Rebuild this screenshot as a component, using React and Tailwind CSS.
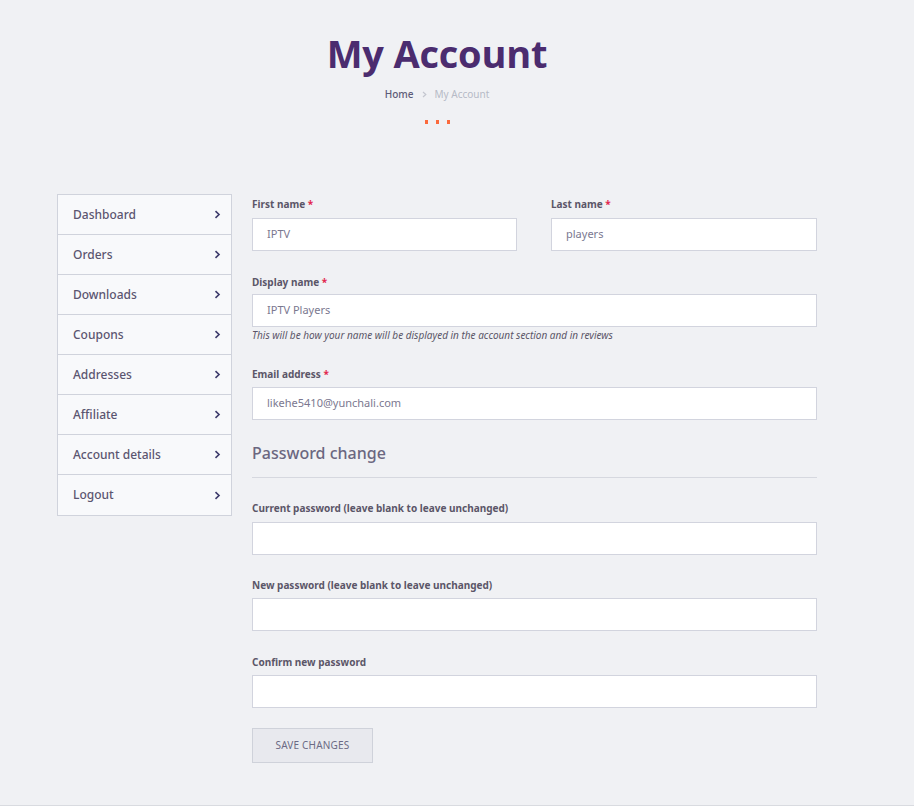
import React from 'react';

const menu = ['Dashboard', 'Orders', 'Downloads', 'Coupons', 'Addresses', 'Affiliate', 'Account details', 'Logout'];

const Chevron = () => (
  <svg width="7" height="9" viewBox="0 0 7 9" fill="none" className="text-[#3d3a6b]">
    <path d="M1.5 1.2L5 4.5L1.5 7.8" stroke="currentColor" strokeWidth="1.6" />
  </svg>
);

const Label = ({ children, required }) => (
  <label className="block text-[10px] font-bold text-[#5b5668] leading-[12px]">
    {children}
    {required && <span className="text-[#e2264d]"> *</span>}
  </label>
);

const Input = ({ value = '', className = '' }) => (
  <div className={`h-[33px] bg-white border border-[#d2d4de] flex items-center px-[14px] text-[11px] text-[#7b7890] ${className}`}>
    {value}
  </div>
);

export default function App() {
  return (
    <div className="min-h-[806px] bg-[#f0f1f4] font-['Noto_Sans',sans-serif] border-b border-[#d9dbe0]">
      {/* Page header */}
      <div className="pt-[29px] pr-[40px] flex flex-col items-center">
        <h1 className="font-['Open_Sans',sans-serif] font-bold text-[38px] leading-[48px] text-[#4b2c6f] tracking-[-0.2px]">
          My Account
        </h1>
        <div className="mt-[11px] flex items-center gap-[8px] text-[10px] leading-[12px]">
          <span className="text-[#5d5b78] font-medium">Home</span>
          <svg width="5" height="7" viewBox="0 0 5 7" fill="none">
            <path d="M1 1L3.8 3.5L1 6" stroke="#c4c6cf" strokeWidth="1.2" />
          </svg>
          <span className="text-[#b6bac6]">My Account</span>
        </div>
        <div className="mt-[20px] flex gap-[8px]">
          <span className="w-[3px] h-[4px] bg-[#fb6a3c]" />
          <span className="w-[3px] h-[4px] bg-[#fb6a3c]" />
          <span className="w-[3px] h-[4px] bg-[#fb6a3c]" />
        </div>
      </div>

      <div className="mt-[70px] flex pl-[57px]">
        {/* Sidebar */}
        <nav className="w-[175px] border border-[#d0d3dc] bg-[#f8f9fb] self-start">
          {menu.map((item, i) => (
            <div
              key={item}
              className={`h-[40px] flex items-center justify-between pl-[15px] pr-[10px] text-[12px] font-medium text-[#5b5570] ${i < menu.length - 1 ? 'border-b border-[#d0d3dc]' : ''}`}
            >
              <span>{item}</span>
              <Chevron />
            </div>
          ))}
        </nav>

        {/* Form */}
        <div className="ml-[20px] w-[565px] pt-[4px]">
          <div className="flex gap-[34px]">
            <div className="w-[265px]">
              <Label required>First name</Label>
              <Input value="IPTV" className="mt-[8px]" />
            </div>
            <div className="flex-1">
              <Label required>Last name</Label>
              <Input value="players" className="mt-[8px]" />
            </div>
          </div>

          <div className="mt-[25px]">
            <Label required>Display name</Label>
            <Input value="IPTV Players" className="mt-[6px]" />
            <p className="mt-[2px] text-[10px] italic text-[#5b5668] leading-[13px]">
              This will be how your name will be displayed in the account section and in reviews
            </p>
          </div>

          <div className="mt-[26px]">
            <Label required>Email address</Label>
            <Input value="likehe5410@yunchali.com" className="mt-[7px]" />
          </div>

          <h3 className="mt-[22px] text-[16px] leading-[22px] text-[#6b6780] font-medium">Password change</h3>
          <div className="mt-[13px] h-px bg-[#d6d8df]" />

          <div className="mt-[24px]">
            <Label>Current password (leave blank to leave unchanged)</Label>
            <Input className="mt-[8px]" />
          </div>
          <div className="mt-[24px]">
            <Label>New password (leave blank to leave unchanged)</Label>
            <Input className="mt-[7px]" />
          </div>
          <div className="mt-[25px]">
            <Label>Confirm new password</Label>
            <Input className="mt-[7px]" />
          </div>

          <button className="mt-[20px] w-[121px] h-[35px] bg-[#e8e9ee] border border-[#cfd2da] text-[10px] text-[#6b6a84] tracking-[0.2px]">
            SAVE CHANGES
          </button>
        </div>
      </div>
    </div>
  );
}
